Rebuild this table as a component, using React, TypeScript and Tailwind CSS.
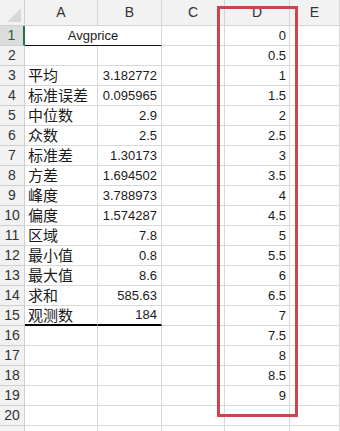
import React from "react";

const left: Record<number, [string, string]> = {
  3: ["平均", "3.182772"],
  4: ["标准误差", "0.095965"],
  5: ["中位数", "2.9"],
  6: ["众数", "2.5"],
  7: ["标准差", "1.30173"],
  8: ["方差", "1.694502"],
  9: ["峰度", "3.788973"],
  10: ["偏度", "1.574287"],
  11: ["区域", "7.8"],
  12: ["最小值", "0.8"],
  13: ["最大值", "8.6"],
  14: ["求和", "585.63"],
  15: ["观测数", "184"],
};

const dVals: Record<number, string> = {
  1: "0", 2: "0.5", 3: "1", 4: "1.5", 5: "2", 6: "2.5", 7: "3", 8: "3.5", 9: "4",
  10: "4.5", 11: "5", 12: "5.5", 13: "6", 14: "6.5", 15: "7", 16: "7.5", 17: "8",
  18: "8.5", 19: "9",
};

const font = { fontFamily: '"Liberation Sans", "Noto Sans CJK SC", sans-serif' };
const cjk = { fontFamily: '"Noto Sans CJK SC", "Liberation Sans", sans-serif' };

export default function App() {
  const rows = Array.from({ length: 21 }, (_, i) => i + 1);
  return (
    <div className="relative w-[340px] h-[431px] overflow-hidden bg-white text-[13px] text-[#1a1a1a]" style={font}>
      <div className="grid grid-cols-[25px_73px_64px_63px_65px_50px]">
        <div className="h-[26px] bg-[#f2f2f2] border-r border-b border-[#cfcfcf] relative">
          <div className="absolute right-[3px] bottom-[3px] w-0 h-0 border-l-[14px] border-l-transparent border-b-[14px] border-b-[#d8d8d8]" />
        </div>
        {["A", "B", "C", "D", "E"].map((c) => (
          <div key={c} className="h-[26px] bg-[#f2f2f2] border-r border-b border-[#d4d4d4] flex items-center justify-center text-[14px] text-[#333]">
            {c}
          </div>
        ))}
        {rows.map((r) => {
          const l = left[r];
          const bottomThick = r === 15;
          return (
            <React.Fragment key={r}>
              <div
                className={
                  r === 1
                    ? "h-[20px] bg-[#dcdcdc] border-r-2 border-r-[#217346] border-b border-b-[#cfcfcf] flex items-center justify-center text-[14px] text-[#1f5f3a]"
                    : "h-[20px] bg-[#f2f2f2] border-r border-b border-[#cfcfcf] flex items-center justify-center text-[14px] text-[#333]"
                }
              >
                {r <= 20 ? r : ""}
              </div>
              {r === 1 ? (
                <div className="col-span-2 h-[20px] border-r border-[#d9d9d9] border-b border-b-[#111] flex items-center justify-center">
                  Avgprice
                </div>
              ) : (
                <>
                  <div
                    className={
                      bottomThick
                        ? "h-[20px] border-r border-r-[#d9d9d9] border-b-2 border-b-black flex items-center pl-[3px] text-[15px] text-[#1a1a1a]"
                        : "h-[20px] border-r border-b border-[#d9d9d9] flex items-center pl-[3px] text-[15px] text-[#1a1a1a]"
                    }
                    style={cjk}
                  >
                    {l ? l[0] : ""}
                  </div>
                  <div
                    className={
                      bottomThick
                        ? "h-[20px] border-r border-r-[#d9d9d9] border-b-2 border-b-black flex items-center justify-end pr-[4px]"
                        : "h-[20px] border-r border-b border-[#d9d9d9] flex items-center justify-end pr-[4px]"
                    }
                  >
                    {l ? l[1] : ""}
                  </div>
                </>
              )}
              <div className="h-[20px] border-r border-b border-[#d9d9d9]" />
              <div className="h-[20px] border-r border-b border-[#d9d9d9] flex items-center justify-end pr-[3px]">
                {dVals[r] ?? ""}
              </div>
              <div className="h-[20px] border-r border-b border-[#d9d9d9]" />
            </React.Fragment>
          );
        })}
      </div>
      <div className="absolute left-[217px] top-[6px] w-[81px] h-[411px] border-[3px] border-[#c94550] pointer-events-none" />
    </div>
  );
}
